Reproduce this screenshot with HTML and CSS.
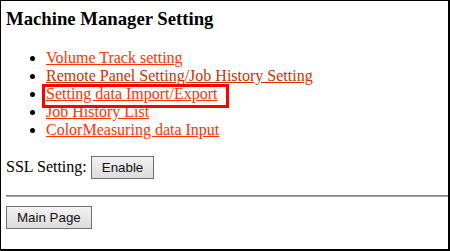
FILE: index.html
```html
<!DOCTYPE html>
<html lang="en">
<head>
    <meta charset="utf-8">
    <title>Machine Manager Setting</title>
    <link rel="stylesheet" href="styles.css">
</head>
<body>
    <div class="page">
        <h3>Machine Manager Setting</h3>
        <ul class="menu">
            <li><a href="#volume">Volume Track setting</a></li>
            <li><a href="#remote" class="visited">Remote Panel Setting/Job History Setting</a></li>
            <li class="marked"><a href="#import">Setting data Import/Export</a><span class="mark"></span></li>
            <li><a href="#history">Job History List</a></li>
            <li><a href="#color">ColorMeasuring data Input</a></li>
        </ul>
        <p class="ssl">SSL Setting: <button>Enable</button></p>
        <hr>
        <button>Main Page</button>
    </div>
</body>
</html>
```

FILE: styles.css
```css
html,
body {
    margin: 0;
    padding: 0;
    background: #ffffff;
}

body {
    font-family: "Liberation Serif", "Times New Roman", serif;
    font-size: 16px;
    color: #000000;
}

.page {
    box-sizing: border-box;
    width: 450px;
    height: 251px;
    border-top: 1px solid #000000;
    border-left: 1px solid #000000;
    border-right: 2px solid #000000;
    border-bottom: 2px solid #000000;
    padding: 7px 0 0 5px;
}

h3 {
    margin: 0;
    font-size: 18.72px;
    line-height: 21px;
    font-weight: bold;
}

.menu {
    margin: 20px 0 17px;
    padding-left: 40px;
}

.menu li {
    line-height: 18px;
}

.marked {
    position: relative;
}

.mark {
    position: absolute;
    left: -4px;
    top: -1px;
    width: 187px;
    height: 24px;
    box-sizing: border-box;
    border: 3px solid #ff0000;
}

a {
    color: #ff3300;
    text-decoration: underline;
}

a.visited {
    color: #cc3300;
}

.ssl {
    margin: 0;
    line-height: 18px;
}

button {
    font-family: "Liberation Sans", Arial, sans-serif;
    font-size: 13.33px;
    color: #111111;
    padding: 3px 10px;
    border: 1px solid #707070;
    border-radius: 0;
    background: linear-gradient(#f2f2f2, #dcdcdc);
    line-height: 15px;
}

hr {
    margin: 16px 0 9px;
    height: 0;
    border: 0;
    border-top: 1px solid #808080;
    border-bottom: 1px solid #a8a8a8;
}
```
